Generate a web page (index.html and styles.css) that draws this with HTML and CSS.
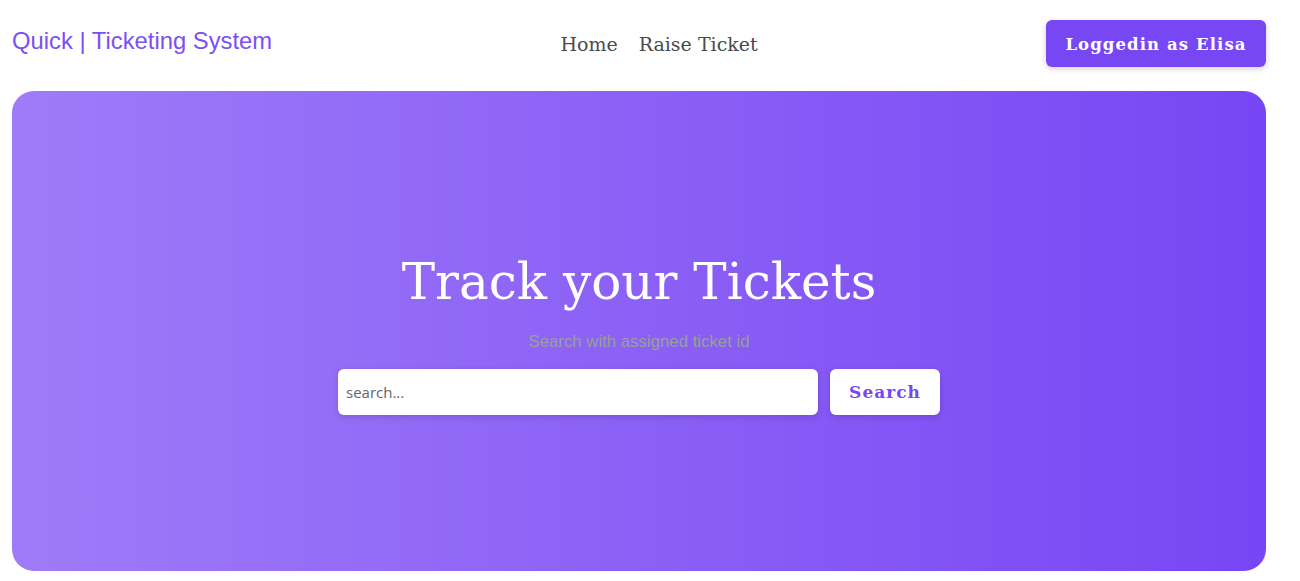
FILE: index.html
```html
<!DOCTYPE html>
<html>
<head>
<meta charset="utf-8">
<link rel="stylesheet" href="styles.css">
</head>
<body>
<header class="navbar">
  <div class="brand">Quick | Ticketing System</div>
  <nav class="links">
    <a href="#">Home</a>
    <a href="#">Raise Ticket</a>
  </nav>
  <button class="user-btn">Loggedin as Elisa</button>
</header>
<section class="hero">
  <h1 class="hero-title">Track your Tickets</h1>
  <p class="hero-sub">Search with assigned ticket id</p>
  <form class="search">
    <input class="search-input" type="text" placeholder="search...">
    <button class="search-btn" type="button">Search</button>
  </form>
</section>
</body>
</html>
```
FILE: styles.css
```css
* { box-sizing: border-box; }
html, body { margin: 0; padding: 0; background: #fff; }
body { font-family: "DejaVu Serif", serif; }

.navbar {
  display: flex;
  justify-content: space-between;
  align-items: flex-start;
  padding: 20px 34px 0 12px;
  height: 91px;
}
.brand {
  font-family: "Liberation Sans", Arial, sans-serif;
  font-size: 23.8px;
  color: #7c4ff5;
  margin-top: 7px;
}
.links {
  display: flex;
  gap: 21px;
  margin-top: 13px;
}
.links a {
  font-family: "DejaVu Serif", serif;
  font-size: 19px;
  color: #4a4a4a;
  text-decoration: none;
}
.user-btn {
  width: 220px;
  height: 47px;
  border: none;
  border-radius: 6px;
  background: #7747f4;
  color: #fff;
  font-family: "DejaVu Serif", serif;
  font-weight: bold;
  font-size: 16.5px;
  letter-spacing: 1.1px;
  padding-top: 2px;
  box-shadow: 0 2px 6px rgba(0,0,0,0.18);
}

.hero {
  margin: 0 34px 0 12px;
  height: 480px;
  border-radius: 22px;
  background: linear-gradient(90deg, #9f7bf8 0%, #7746f4 100%);
  display: flex;
  flex-direction: column;
  align-items: center;
  justify-content: center;
  padding-top: 6px;
}
.hero-title {
  margin: 0;
  font-family: "DejaVu Serif", serif;
  font-weight: normal;
  font-size: 50px;
  color: #fff;
}
.hero-sub {
  margin: 21px 0 17px;
  font-family: "Liberation Sans", Arial, sans-serif;
  font-size: 16.8px;
  color: #9a9f9a;
}
.search {
  display: flex;
  gap: 12px;
}
.search-input {
  width: 480px;
  height: 46px;
  border: none;
  border-radius: 6px;
  padding: 0 8px;
  font-family: "Open Sans", sans-serif;
  font-size: 15px;
  outline: none;
  box-shadow: 0 2px 6px rgba(0,0,0,0.15);
}
.search-input::placeholder { color: #666; }
.search-btn {
  width: 110px;
  height: 46px;
  border: none;
  border-radius: 6px;
  background: #fff;
  color: #7747f4;
  font-family: "DejaVu Serif", serif;
  font-weight: bold;
  font-size: 17px;
  letter-spacing: 1px;
  box-shadow: 0 2px 6px rgba(0,0,0,0.15);
}
```
